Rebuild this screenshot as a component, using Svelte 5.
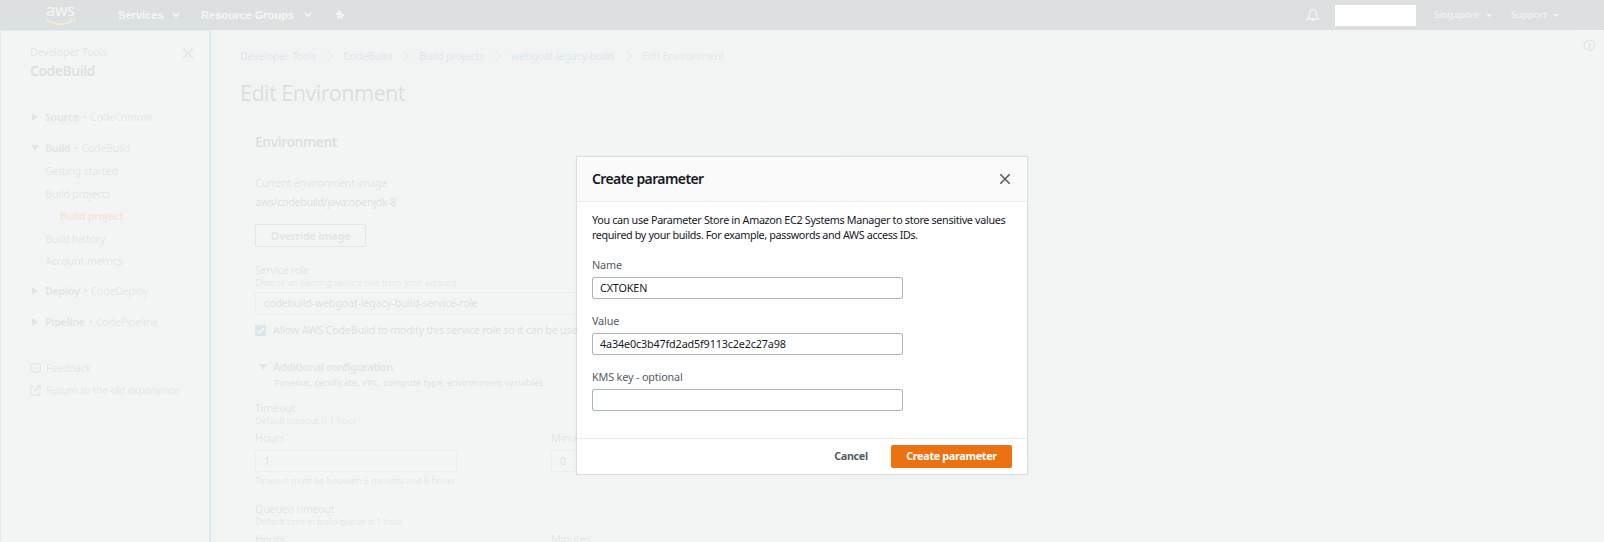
<script>
  const crumbs = [
    { label: 'Developer Tools', width: 76 },
    { label: 'CodeBuild', width: 49 },
    { label: 'Build projects', width: 65 },
    { label: 'webgoat-legacy-build', width: 104 },
  ];
  const buildLinks = ['Getting started', 'Build projects', 'Build project', 'Build history', 'Account metrics'];
  let name = $state('CXTOKEN');
  let value = $state('4a34e0c3b47fd2ad5f9113c2e2c27a98');
  let kms = $state('');
</script>

{#snippet chevron()}
  <svg class="chev" width="8" height="6" viewBox="0 0 8 6"><path d="M1 1.2 4 4.2 7 1.2" fill="none" stroke="#fff" stroke-width="1.7" /></svg>
{/snippet}
{#snippet close()}
  <svg width="12" height="12" viewBox="0 0 12 12"><path d="M1.3 1.3 10.7 10.7M10.7 1.3 1.3 10.7" fill="none" stroke="#545b64" stroke-width="1.6" /></svg>
{/snippet}

<div class="page">
  <header>
    <div class="logo">
      <span>aws</span>
      <svg width="31" height="8" viewBox="0 0 31 8"><path d="M.8 1.2C9 7.400 20 7.400 27 2.800" fill="none" stroke="#f90" stroke-width="1.7" /><path d="M24.500 1.400Q28.500.2 29.500 1.100T28 5.300" fill="none" stroke="#f90" stroke-width="1.300" /></svg>
    </div>
    <span class="nav services">Services</span>{@render chevron()}
    <span class="nav groups">Resource Groups</span>{@render chevron()}
    <svg class="pin" width="10" height="11" viewBox="0 0 10 11"><path d="M3.200.3 5 .2 6.700 3 9 4.600V6.200L6.300 7 8.800 10.300 4.800 7.800 3 9.400 2.200 8.600 2.900 5.600.5 4.600V3.500L3.400 2.600Z" fill="#fff" /></svg>
    <div class="grow"></div>
    <svg class="bell" width="14" height="14" viewBox="0 0 14 14"><path d="M1.500 11C4 9 3 6 4 3.500Q5 1.400 7 1.400T10 3.500C11 6 10 9 12.500 11Z" fill="none" stroke="#fff" stroke-width="1.300" /><path d="M5.200 11.500a1.800 1.800 0 0 0 3.600 0Z" fill="#fff" /></svg>
    <div class="account"></div>
    <span class="small region">Singapore</span><i></i>
    <span class="small support">Support</span><i></i>
  </header>

  <div class="body">
    <aside>
      <div class="side-head">
        <div><p>Developer Tools</p><h2>CodeBuild</h2></div>
        {@render close()}
      </div>
      <nav>
        <div class="group"><b class="tri"></b><strong>Source</strong><em>•</em><span>CodeCommit</span></div>
        <div class="group"><b class="tri down"></b><strong>Build</strong><em>•</em><span>CodeBuild</span></div>
        <ul>
          {#each buildLinks as link, i}
            <li class:active={i === 2}>{link}</li>
          {/each}
        </ul>
        <div class="group"><b class="tri"></b><strong>Deploy</strong><em>•</em><span>CodeDeploy</span></div>
        <div class="group"><b class="tri"></b><strong>Pipeline</strong><em>•</em><span>CodePipeline</span></div>
      </nav>
      <div class="side-foot">
        <div>
          <svg width="11" height="11" viewBox="0 0 11 11" fill="none" stroke="#687078" stroke-width="1.200"><path d="M.7.900H10.300V8.700H7L5.500 10.200 4 8.700H.7ZM3 4.900h1M5 4.900h1M7 4.900h1" /></svg>
          Feedback
        </div>
        <div>
          <svg width="11" height="11" viewBox="0 0 11 11" fill="none" stroke="#687078" stroke-width="1.300"><path d="M4.500 1.200H.8V10.200H9.800V6.500M6.500.8H10.200V4.500M10 1 4 7" /></svg>
          Return to the old experience
        </div>
      </div>
    </aside>

    <main>
      <div class="crumbs">
        {#each crumbs as c}
          <a href="#top" style="width: {c.width}px">{c.label}</a>
          <svg width="8" height="12" viewBox="0 0 8 12"><path d="M1.500 1 6.500 6 1.500 11" fill="none" stroke="#879596" stroke-width="1.200" /></svg>
        {/each}
        <span>Edit Environment</span>
      </div>
      <h1>Edit Environment</h1>
      <section>
        <div class="card-head">Environment</div>
        <div class="card-body">
          <p class="label">Current environment image</p>
          <p class="text">aws/codebuild/java:openjdk-8</p>
          <button class="override">Override image</button>
          <p class="label">Service role</p>
          <p class="hint">Choose an existing service role from your account</p>
          <div class="field wide">codebuild-webgoat-legacy-build-service-role</div>
          <div class="check">
            <svg width="11" height="11" viewBox="0 0 11 11"><rect width="11" height="11" rx="1" fill="#0073bb" /><path d="M2 5.600 4.500 8 9 2.800" fill="none" stroke="#fff" stroke-width="1.500" /></svg>
            <span>Allow AWS CodeBuild to modify this service role so it can be use</span>
          </div>
        </div>
        <div class="more">
          <div class="more-title"><b class="tri down"></b>Additional configuration</div>
          <p class="more-sub">Timeout, certificate, VPC, compute type, environment variables</p>
          <p class="label t">Timeout</p>
          <p class="hint">Default timeout is 1 hour</p>
          <div class="cols">
            <div><p class="label">Hours</p><div class="field">1</div></div>
            <div><p class="label">Minutes</p><div class="field">0</div></div>
          </div>
          <p class="hint limit">Timeout must be between 5 minutes and 8 hours</p>
          <p class="label q">Queued timeout</p>
          <p class="hint queue">Default time in build queue is 1 hour</p>
          <div class="cols second">
            <div><p class="label">Hours</p></div>
            <div><p class="label">Minutes</p></div>
          </div>
        </div>
      </section>
    </main>

    <div class="rail">
      <svg width="13" height="13" viewBox="0 0 13 13"><circle cx="6.500" cy="6.500" r="5.400" fill="none" stroke="#545b64" stroke-width="1.300" /><path d="M5.500 5.700H6.800V9M5.200 9.200H8.200M6 3.700H7.200" fill="none" stroke="#545b64" stroke-width="1.300" /></svg>
    </div>
  </div>

  <div class="overlay">
    <div class="mask"></div>
    <div class="modal">
      <div class="modal-head"><h3>Create parameter</h3>{@render close()}</div>
      <div class="modal-body">
        <p class="intro"><span class="l1">You can use Parameter Store in Amazon EC2 Systems Manager to store sensitive values</span><br /><span>required by your builds. For example, passwords and AWS access IDs.</span></p>
        <label>Name<input bind:value={name} /></label>
        <label>Value<input class="token" bind:value={value} /></label>
        <label>KMS key - optional<input bind:value={kms} /></label>
      </div>
      <div class="modal-foot">
        <button class="cancel">Cancel</button>
        <button class="create">Create parameter</button>
      </div>
    </div>
  </div>
</div>

<style>
  :global(body) { margin: 0; background: #f2f3f3; }
  .page, .page * { box-sizing: border-box; }
  .page {
    position: relative; width: 1604px; height: 542px; overflow: hidden;
    display: flex; flex-direction: column; background: #f2f3f3;
    font: 10.8px/16px "Noto Sans", sans-serif; letter-spacing: -0.27px; color: #16191f; white-space: nowrap;
  }
  p, h1, h2, h3, ul { margin: 0; padding: 0; }
  svg { display: block; flex: none; }
  button, input { font: inherit; letter-spacing: inherit; margin: 0; color: inherit; }

  header { height: 30px; flex: none; display: flex; align-items: center; background: #232f3e; color: #fff; padding: 0 45px; }
  .logo { width: 31px; height: 22px; display: flex; flex-direction: column; margin-right: 42px; }
  .logo span { font-size: 16px; line-height: 13px; height: 14px; text-align: center; letter-spacing: -0.2px; }
  .nav { font: bold 11.200px/16px "Liberation Sans", sans-serif; letter-spacing: -0.05px; }
  .services { width: 54px; }
  .groups { width: 103px; margin-left: 21px; }
  .pin { margin-left: 23px; }
  .grow { flex: 1; }
  .bell { margin-right: 15px; }
  .account { position: relative; z-index: 3; width: 81px; height: 21px; margin-right: 18px; background: #fff; }
  .small { font-size: 9.500px; letter-spacing: 0; }
  .region { width: 52px; }
  .support { width: 42px; margin-left: 19px; }
  header i { width: 6px; border: 3px solid transparent; border-top-color: #fff; border-bottom: 0; }

  .body { flex: 1; display: flex; min-height: 0; }
  aside { width: 211px; flex: none; background: #fff; border: 1px solid #00a1c9; border-right-width: 2px; border-bottom: 0; }
  .side-head { height: 64px; padding: 13px 15px 0 29px; display: flex; justify-content: space-between; border-bottom: 1px solid #d5dbdb; }
  .side-head p { color: #545b64; height: 17px; }
  .side-head h2 { font-size: 14px; line-height: 20px; font-weight: 600; letter-spacing: -0.5px; }
  .side-head svg { margin-top: 3px; }
  nav { height: 251px; padding: 14px 0 0 31px; border-bottom: 1px solid #d5dbdb; }
  .group { height: 16px; margin-bottom: 15px; display: flex; align-items: center; color: #687078; }
  .group strong { font-weight: 700; color: #545b64; letter-spacing: -0.4px; }
  .group span { letter-spacing: -0.4px; }
  .group em { font-style: normal; margin: 0 3.500px; width: 4px; text-align: center; }
  .tri { width: 0; height: 0; flex: none; border: 4px solid transparent; border-left: 6px solid #545b64; border-right: 0; margin-right: 7px; }
  .tri.down { border: 4px solid transparent; border-top: 6px solid #545b64; border-bottom: 0; margin-right: 6px; margin-left: -1px; }
  ul { list-style: none; padding-left: 13px; margin: -11px 0 10px; color: #545b64; }
  li { height: 22.600px; line-height: 22px; }
  li.active { padding-left: 15px; color: #ec7211; font-weight: 700; letter-spacing: -0.400px; }
  .side-foot { padding: 14px 0 0 29px; color: #687078; letter-spacing: -0.4px; }
  .side-foot div { display: flex; align-items: center; gap: 5px; height: 16px; margin-bottom: 6px; }

  main { width: 630px; flex: none; padding: 18px 0 0 29px; }
  .crumbs { display: flex; align-items: center; height: 16px; color: #687078; letter-spacing: -0.32px; }
  .crumbs a { color: #0073bb; text-decoration: none; }
  .crumbs svg { margin: 0 9px 0 10px; }
  h1 { font-size: 21.500px; line-height: 30px; height: 30px; font-weight: 400; margin: 14px 0 12px; letter-spacing: -0.55px; }
  section { width: 602px; height: 460px; margin-left: -1px; background: #fff; border: 1px solid #eaeded; }
  .card-head { height: 44px; padding: 11px 15px; line-height: 20px; font-size: 14px; font-weight: 600; letter-spacing: -0.550px; background: #fafafa; border-bottom: 1px solid #eaeded; }
  .card-body { height: 185px; padding: 10px 15px 0; border-bottom: 1px solid #eaeded; letter-spacing: -0.38px; }
  .label { color: #545b64; height: 16px; }
  .hint { color: #687078; font-size: 8.900px; line-height: 12px; height: 12px; letter-spacing: -0.12px; }
  .text { margin-top: 3px; }
  .override { display: block; width: 111px; height: 23px; margin: 14px 0 15px; padding: 0; border: 1px solid #545b64; border-radius: 2px; background: #fff; color: #545b64; font-weight: 700; letter-spacing: -0.3px; line-height: 18px; }
  .card-body .hint { margin: -1px 0 3px; }
  .field { width: 202px; height: 22px; border: 1px solid #aab7b8; border-radius: 2px; padding: 0 8px; line-height: 20px; letter-spacing: -0.25px; }
  .field.wide { width: 570px; height: 23px; }
  .check { display: flex; align-items: center; gap: 7px; margin-top: 7px; letter-spacing: -0.27px; }
  .check span { width: 304px; overflow: hidden; }
  .more { padding: 9px 15px 0; }
  .more-title { display: flex; align-items: center; height: 16px; padding-left: 5px; font-weight: 700; color: #545b64; letter-spacing: -0.500px; }
  .more-sub { padding-left: 19px; font-size: 9px; font-weight: 600; line-height: 15px; letter-spacing: -0.13px; color: #545b64; }
  .t { margin-top: 10px; }
  .more .hint { margin-top: -1px; }
  .cols { display: flex; gap: 94px; margin-top: 3px; }
  .cols > div { width: 202px; }
  .cols .field { margin-top: 4px; }
  .more .limit { margin-top: 3px; }
  .q { margin-top: 14px; }

  .rail { margin-left: auto; width: 31px; padding: 9px 0 0 9px; border-left: 1px solid #d5dbdb; background: #fff; }

  .overlay { position: absolute; inset: 0; display: flex; justify-content: center; align-items: flex-start; padding-top: 157px; }
  .mask { position: absolute; inset: 0; background: rgba(242, 244, 243, .9); }
  .modal { position: relative; width: 450px; height: 317px; background: #fff; box-shadow: 0 0 1px 1px rgba(0, 28, 36, .1); }
  .modal-head { height: 45px; padding: 0 16px 0 15px; display: flex; align-items: center; justify-content: space-between; background: #fafafa; border-bottom: 1px solid #eaeded; }
  h3 { font-size: 14px; line-height: 20px; font-weight: 600; letter-spacing: -0.600px; }
  .modal-body { height: 236px; padding: 10px 15px 0; }
  .intro { line-height: 15px; height: 30px; margin-bottom: 15px; letter-spacing: -0.34px; }
  .l1 + br + span { letter-spacing: -0.38px; }
  label { display: block; height: 56px; color: #545b64; line-height: 16px; letter-spacing: -0.15px; }
  input { display: block; width: 311px; height: 22px; margin-top: 4px; padding: 0 7px 1px; border: 1px solid #aab7b8; border-radius: 2px; background: #fff; outline: 0; color: #16191f; }
  .modal-foot { height: 36px; border-top: 1px solid #eaeded; display: flex; align-items: center; justify-content: flex-end; padding-right: 15px; }
  .modal-foot button { padding: 0 0 1px; border: 0; background: none; font-weight: 700; letter-spacing: -0.32px; }
  .modal-foot .cancel { width: 34px; margin-right: 23px; color: #545b64; }
  .modal-foot .create { width: 121px; height: 23px; border-radius: 2px; background: #ec7211; color: #fff; }
</style>
